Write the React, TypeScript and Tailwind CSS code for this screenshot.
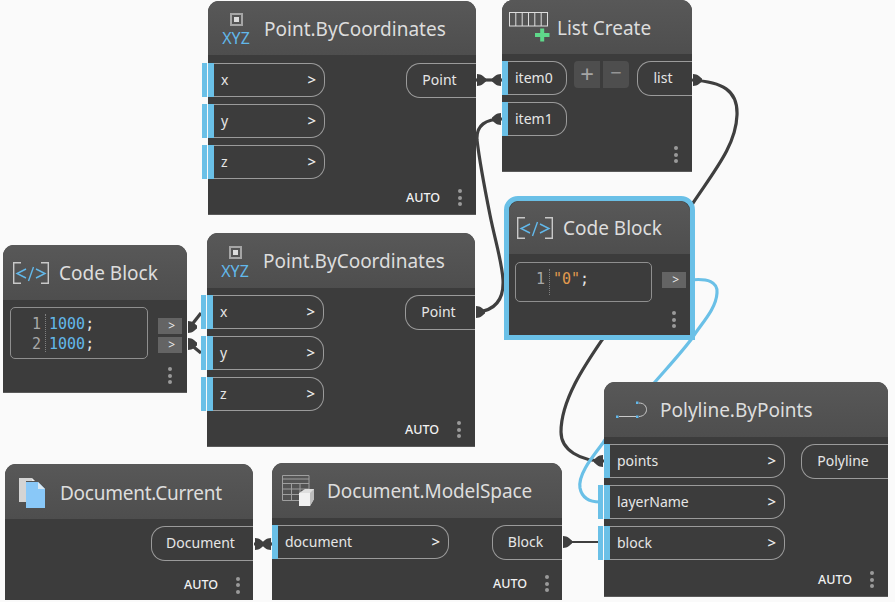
import React from "react";

const Dots = () => (
  <div className="flex flex-col gap-[2.5px]">
    <span className="w-1 h-1 rounded-full bg-[#9a9a9a]" />
    <span className="w-1 h-1 rounded-full bg-[#9a9a9a]" />
    <span className="w-1 h-1 rounded-full bg-[#9a9a9a]" />
  </div>
);

const InPort = ({ name, wide = true, chevron = true, w }: { name: string; wide?: boolean; chevron?: boolean; w: string }) => (
  <div className={`relative flex items-center h-[34px] ${w}`}>
    {wide && <span className="absolute left-[-6px] top-0 bottom-0 w-[5px] bg-[#6ac0e7]" />}
    <span className="w-[6px] h-full bg-[#6ac0e7] shrink-0" />
    <div className="flex-1 h-full flex items-center justify-between border border-l-0 border-[#9b9b9b] rounded-r-[14px] pl-[7px] pr-[8px] pb-[2px] text-[14px] text-[#e6e6e6]">
      <span>{name}</span>
      {chevron && <span className="text-[15px] font-medium text-[#eeeeee]">&gt;</span>}
    </div>
  </div>
);

const OutPill = ({ name, w }: { name: string; w: string }) => (
  <div className={`h-[35px] ${w} flex items-center justify-center border border-r-0 border-[#9b9b9b] rounded-l-[14px] text-[14px] text-[#e6e6e6] pr-[4px] pb-[2px]`}>
    {name}
  </div>
);

const Header = ({ h, icon, title, gap }: { h: string; icon: React.ReactNode; title: string; gap: string }) => (
  <div className={`${h} shrink-0 flex items-center ${gap} bg-gradient-to-b from-[#585858] to-[#4e4e4e] rounded-t-[11px] text-[19px] text-[#dddddd] whitespace-nowrap`}>
    {icon}
    <span className="mt-[2px]">{title}</span>
  </div>
);

const Footer = ({ cls }: { cls: string }) => (
  <div className={`absolute flex items-center ${cls}`}>
    <span className="text-[12.5px] font-medium text-[#f2f2f2] w-[52px] mt-[1px]">AUTO</span>
    <Dots />
  </div>
);

const XyzIcon = () => (
  <div className="w-[28px] mt-[3px] shrink-0 flex flex-col items-center">
    <span className="w-[13px] h-[13px] border-[2px] border-[#a5a5a5] flex items-center justify-center">
      <span className="w-[5px] h-[5px] bg-[#dcdcdc]" />
    </span>
    <span className="text-[16px] leading-[16px] mt-[4px] text-[#62b8ea]">XYZ</span>
  </div>
);

const CodeIcon = () => (
  <svg width="36" height="22" viewBox="0 0 36 22" className="shrink-0" fill="none">
    <path d="M8 0.7H0.7V21.3H8M28 0.7H35.3V21.3H28" stroke="#c8c8c8" strokeWidth="1.4" />
    <path d="M13 7L4 11.5L13 16M23 7L32 11.5L23 16M20.5 5L15.5 19" stroke="#62b8ea" strokeWidth="1.4" />
  </svg>
);

const ListIcon = () => (
  <svg width="41" height="30" viewBox="0 0 41 30" className="shrink-0" fill="none">
    <rect x="0.5" y="0.5" width="38" height="13.5" stroke="#dddddd" />
    <path d="M6.8 1V14M13.2 1V14M19.5 1V14M25.8 1V14M32.2 1V14" stroke="#dddddd" />
    <path d="M26 23H40.5M33.2 16.5V29.5" stroke="#5fd88a" strokeWidth="4" />
  </svg>
);

const DocIcon = () => (
  <svg width="27" height="32" viewBox="0 0 27 32" className="shrink-0">
    <path d="M0 1H13V4H7V25H0Z" fill="#d4d4d4" />
    <path d="M7 5H19L26 12V31H7Z" fill="#89c8f8" />
    <path d="M19 5L26 12H19Z" fill="#d9e9f4" />
    <path d="M13 1L16 4H13Z" fill="#eeeeee" />
  </svg>
);

const TableIcon = () => (
  <svg width="32" height="31" viewBox="0 0 32 31" className="shrink-0" fill="none">
    <path d="M0.5 0.5H27V25.5H0.5Z" stroke="#9f9f9f" />
    <path d="M0.5 4H27M0.5 8.5H27M0.5 14H27M0.5 19.5H27M9.5 8.5V25.5M18 8.5V25.5" stroke="#9f9f9f" />
    <path d="M17 18L23 14H32V24L28 31H17Z" fill="#dedede" />
    <path d="M17 18H28V31H17Z" fill="#f0f0f0" />
    <path d="M28 18L32 14V24L28 31Z" fill="#bdbdbd" />
  </svg>
);

const PolyIcon = () => (
  <svg width="32" height="20" viewBox="0 0 32 20" className="shrink-0" fill="none">
    <path d="M3 16.5H20M23 16.5C33 16 33 3 23 3" stroke="#c9c9c9" strokeWidth="1" />
    <rect x="0" y="15.5" width="2.5" height="2.5" fill="#62b8ea" />
    <rect x="20" y="15.5" width="2.5" height="2.5" fill="#62b8ea" />
    <rect x="20" y="1.5" width="2.5" height="2.5" fill="#62b8ea" />
  </svg>
);

const Conn = ({ x, y, flip }: { x: number; y: number; flip?: boolean }) => (
  <path
    d="M0 -6C5 -6 7 -3 9 -1.5V1.5C7 3 5 6 0 6Z"
    fill="#3f3f3f"
    transform={`translate(${x} ${y}) scale(${flip ? -1 : 1} 1)`}
  />
);

const Wires = () => (
  <svg className="absolute inset-0" width="895" height="602" viewBox="0 0 895 602" fill="none">
    <g stroke="#3f3f3f" strokeWidth="3.2">
      <path d="M476 80H502" />
      <path d="M478 312C495 310 504 300 503 280C502 262 495 240 490 215C485 190 480 165 477 140C476 125 486 119 502 119" />
      <path d="M692 80C722 82 738 90 737 115C736 145 715 170 693 203C665 245 625 305 602 340C585 365 561 400 561 432C561 450 580 461 604 461" />
      <path d="M190 327L201 313" />
      <path d="M190 344L201 353" />
      <path d="M254 544H272" />
    </g>
    <path d="M563 542H600" stroke="#3f3f3f" strokeWidth="2.2" />
    <path d="M690 280C708 278 718 282 717 293C716 310 700 325 693 337C682 352 668 367 655 382C635 405 610 430 603 443C590 460 578 475 580 488C582 498 590 502 600 502" stroke="#6ac0e7" strokeWidth="3.2" />
    <Conn x={477} y={80} />
    <Conn x={501} y={80} flip />
    <Conn x={693} y={80} />
    <Conn x={501} y={119} flip />
    <Conn x={476} y={312} />
    <Conn x={603} y={461} flip />
    <Conn x={563} y={542} />
    <Conn x={188} y={327} />
    <Conn x={188} y={344} />
    <Conn x={255} y={544} />
    <Conn x={271} y={544} flip />
  </svg>
);

const Code = ({ lines, num, gutter }: { lines: React.ReactNode[]; num: string; gutter: string }) => (
  <div className={`flex border border-[#8f8f8f] rounded-[5px] font-['DejaVu_Sans_Mono',monospace] text-[15px] leading-[20px] ${num}`}>
    <div className={`${gutter} flex flex-col items-end pr-[4px] text-[#a8a8a8] py-[6px]`}>
      {lines.map((_, i) => (
        <span key={i}>{i + 1}</span>
      ))}
    </div>
    <div className="flex-1 flex flex-col border-l border-dotted border-[#808080] pl-[3px] my-[6px]">
      {lines.map((l, i) => (
        <span key={i}>{l}</span>
      ))}
    </div>
  </div>
);

const OutBtn = () => (
  <div className="w-[24px] h-[16px] bg-[#646464] flex items-center justify-end pr-[7px] text-[12px] text-[#eeeeee]">&gt;</div>
);

export default function App() {
  return (
    <div className="relative w-[895px] h-[602px] overflow-hidden bg-[#fafafa] font-['Noto_Sans',sans-serif]">
      <Wires />

      {/* Point.ByCoordinates, top */}
      <div className="absolute left-[208px] top-[1px] w-[268px] h-[214px] bg-[#3c3c3c] rounded-t-[11px] border-b border-[#5a5a5a] flex flex-col">
        <Header h="h-[54px]" gap="gap-[14px] pl-[14px]" icon={<XyzIcon />} title="Point.ByCoordinates" />
        <div className="flex justify-between pt-[8px]">
          <div className="flex flex-col gap-[7px]">
            <InPort name="x" w="w-[117px]" />
            <InPort name="y" w="w-[117px]" />
            <InPort name="z" w="w-[117px]" />
          </div>
          <OutPill name="Point" w="w-[70px]" />
        </div>
        <Footer cls="right-[14px] bottom-[6.5px]" />
      </div>

      {/* List Create */}
      <div className="absolute left-[502px] top-0 w-[190px] h-[172px] bg-[#3c3c3c] rounded-t-[11px] border-b border-[#5a5a5a] flex flex-col">
        <Header h="h-[54px]" gap="gap-[7px] pl-[7px]" icon={<ListIcon />} title="List Create" />
        <div className="flex justify-between pt-[7px]">
          <div className="flex flex-col gap-[7px]">
            <InPort name="item0" wide={false} chevron={false} w="w-[65px]" />
            <InPort name="item1" wide={false} chevron={false} w="w-[65px]" />
          </div>
          <div className="flex gap-[3px] h-[27px] ml-[7px]">
            <div className="w-[26px] bg-[#4e4e4e] rounded-l-[4px] flex items-center justify-center text-[24px] pb-[2px] text-[#a5a5a5]">+</div>
            <div className="w-[26px] bg-[#4e4e4e] rounded-r-[4px] flex items-center justify-center text-[20px] pb-[3px] text-[#959595]">−</div>
          </div>
          <div className="ml-auto"><OutPill name="list" w="w-[55px]" /></div>
        </div>
        <div className="absolute right-[14px] bottom-[8px]"><Dots /></div>
      </div>

      {/* Code Block, selected */}
      <div className="absolute left-[504px] top-[196px] w-[191px] h-[144px] bg-[#3c3c3c] rounded-t-[14px] border-[5px] border-[#6ac0e7] flex flex-col">
        <Header h="h-[53px]" gap="gap-[10px] pl-[8px]" icon={<CodeIcon />} title="Code Block" />
        <div className="flex items-start pl-[6px] pt-[8px]">
          <div className="w-[137px] h-[40px]">
            <Code num="h-[40px]" gutter="w-[33px]" lines={[<span className="text-[#e29a4e]">"0"<span className="text-[#e6e6e6]">;</span></span>]} />
          </div>
          <div className="ml-[10px] mt-[10px]"><OutBtn /></div>
        </div>
        <div className="absolute right-[14px] bottom-[7px]"><Dots /></div>
      </div>

      {/* Code Block, left */}
      <div className="absolute left-[3px] top-[245px] w-[184px] h-[148px] bg-[#3c3c3c] rounded-t-[11px] border-b border-[#5a5a5a] flex flex-col">
        <Header h="h-[55px]" gap="gap-[10px] pl-[10px]" icon={<CodeIcon />} title="Code Block" />
        <div className="flex items-start pl-[7px] pt-[7px]">
          <div className="w-[138px]">
            <Code num="h-[52px]" gutter="w-[34px]" lines={[
              <span className="text-[#62b8ea]">1000<span className="text-[#e6e6e6]">;</span></span>,
              <span className="text-[#62b8ea]">1000<span className="text-[#e6e6e6]">;</span></span>,
            ]} />
          </div>
          <div className="ml-[10px] mt-[11px] flex flex-col gap-[3px]">
            <OutBtn />
            <OutBtn />
          </div>
        </div>
        <div className="absolute right-[15px] bottom-[8px]"><Dots /></div>
      </div>

      {/* Point.ByCoordinates, middle */}
      <div className="absolute left-[207px] top-[233px] w-[268px] h-[214px] bg-[#3c3c3c] rounded-t-[11px] border-b border-[#5a5a5a] flex flex-col">
        <Header h="h-[55px]" gap="gap-[14px] pl-[14px]" icon={<XyzIcon />} title="Point.ByCoordinates" />
        <div className="flex justify-between pt-[7px]">
          <div className="flex flex-col gap-[7px]">
            <InPort name="x" w="w-[117px]" />
            <InPort name="y" w="w-[117px]" />
            <InPort name="z" w="w-[117px]" />
          </div>
          <OutPill name="Point" w="w-[70px]" />
        </div>
        <Footer cls="right-[14px] bottom-[6.5px]" />
      </div>

      {/* Document.Current */}
      <div className="absolute left-[5px] top-[464px] w-[248px] h-[136px] bg-[#3c3c3c] rounded-t-[11px] flex flex-col">
        <Header h="h-[55px]" gap="gap-[14px] pl-[14px] pt-[2px] tracking-[-0.25px]" icon={<DocIcon />} title="Document.Current" />
        <div className="flex justify-end pt-[7px]">
          <OutPill name="Document" w="w-[102px]" />
        </div>
        <Footer cls="right-[13px] bottom-[5px]" />
      </div>

      {/* Document.ModelSpace */}
      <div className="absolute left-[272px] top-[463px] w-[290px] h-[137px] bg-[#3c3c3c] rounded-t-[11px] flex flex-col">
        <Header h="h-[55px]" gap="gap-[13px] pl-[10px] tracking-[-0.1px]" icon={<TableIcon />} title="Document.ModelSpace" />
        <div className="flex justify-between pt-[7px]">
          <InPort name="document" wide={false} w="w-[177px]" />
          <OutPill name="Block" w="w-[70px]" />
        </div>
        <Footer cls="right-[13px] bottom-[6.5px]" />
      </div>

      {/* Polyline.ByPoints */}
      <div className="absolute left-[604px] top-[382px] w-[284px] h-[215px] bg-[#3c3c3c] rounded-t-[11px] border-b border-[#5a5a5a] flex flex-col">
        <Header h="h-[55px]" gap="gap-[12px] pl-[12px]" icon={<PolyIcon />} title="Polyline.ByPoints" />
        <div className="flex justify-between pt-[7px]">
          <div className="flex flex-col gap-[7px]">
            <InPort name="points" wide={false} w="w-[181px]" />
            <InPort name="layerName" w="w-[181px]" />
            <InPort name="block" w="w-[181px]" />
          </div>
          <OutPill name="Polyline" w="w-[87px]" />
        </div>
        <Footer cls="right-[14px] bottom-[6.5px]" />
      </div>
    </div>
  );
}
